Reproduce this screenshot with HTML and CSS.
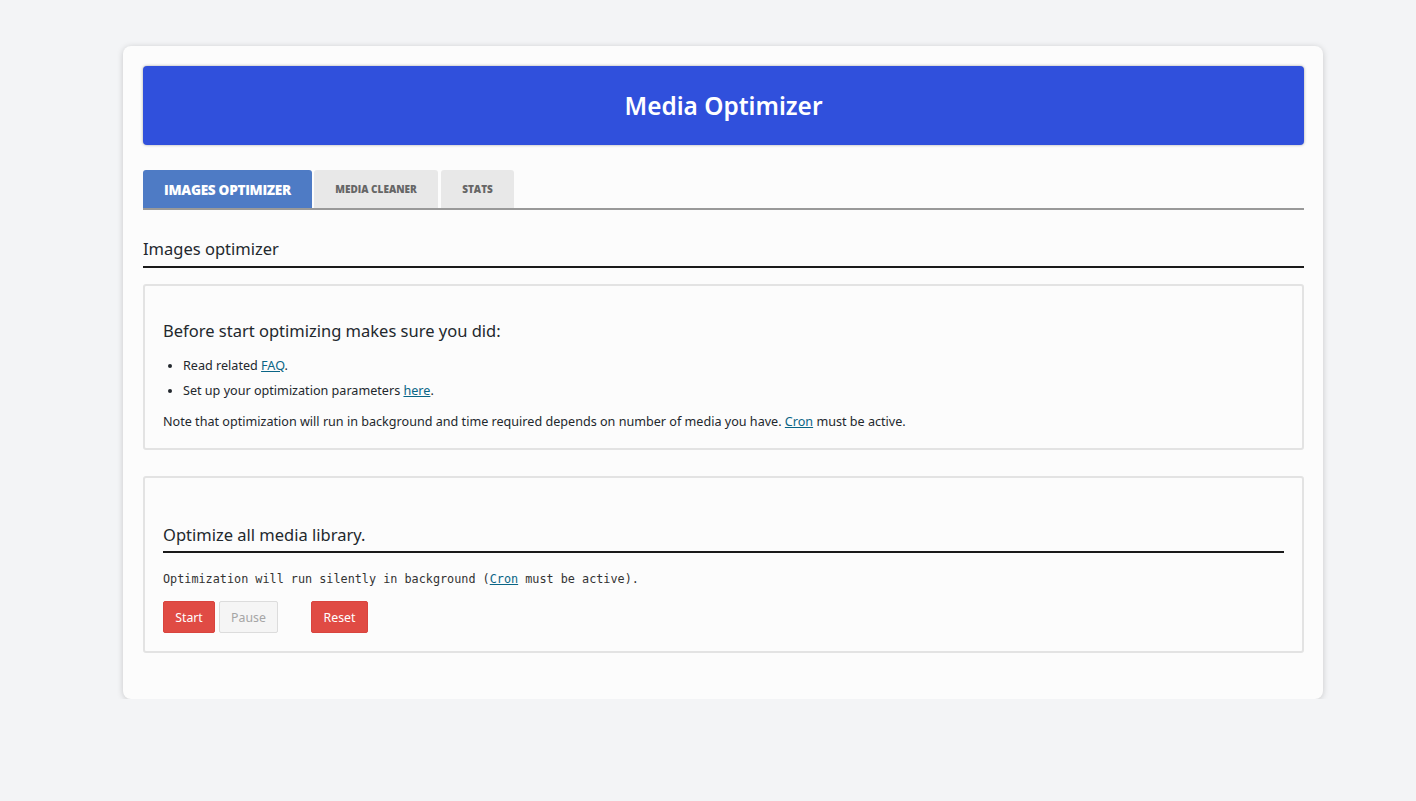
FILE: index.html
```html
<!DOCTYPE html>
<html>
<head>
<meta charset="utf-8">
<link rel="stylesheet" href="styles.css">
</head>
<body>
<div class="page">
  <div class="card">
    <div class="header"><h1>Media Optimizer</h1></div>
    <div class="tabs">
      <div class="tab active">IMAGES OPTIMIZER</div>
      <div class="tab">MEDIA CLEANER</div>
      <div class="tab">STATS</div>
    </div>
    <h2 class="section-title">Images optimizer</h2>
    <div class="box box-info">
      <h3>Before start optimizing makes sure you did:</h3>
      <ul>
        <li>Read related <a href="#">FAQ</a>.</li>
        <li>Set up your optimization parameters <a href="#">here</a>.</li>
      </ul>
      <p>Note that optimization will run in background and time required depends on number of media you have. <a href="#">Cron</a> must be active.</p>
    </div>
    <div class="box box-run">
      <h3 class="underlined">Optimize all media library.</h3>
      <p class="mono">Optimization will run silently in background (<a href="#">Cron</a> must be active).</p>
      <div class="buttons">
        <button class="btn btn-red">Start</button>
        <button class="btn btn-disabled">Pause</button>
        <button class="btn btn-red btn-reset">Reset</button>
      </div>
    </div>
  </div>
</div>
</body>
</html>
```

FILE: styles.css
```css
* { box-sizing: border-box; }
html, body { margin: 0; padding: 0; }
body {
  background: #f3f4f6;
  font-family: "Noto Sans", "Open Sans", sans-serif;
  color: #23282d;
}
.page {
  padding: 46px 0 0 123px;
}
.card {
  width: 1200px;
  height: 653px;
  background: #fcfcfc;
  border-radius: 8px;
  box-shadow: 0 1px 6px rgba(0,0,0,0.18);
  padding: 20px 19px 20px 20px;
}
.header {
  height: 79px;
  background: #3050dc;
  border-radius: 4px;
  box-shadow: 0 0 3px rgba(0,0,0,0.35);
  display: flex;
  align-items: center;
  justify-content: center;
}
.header h1 {
  margin: 0;
  color: #fff;
  font-size: 24.4px;
  font-weight: 600;
  font-family: "Noto Sans", sans-serif;
}
.tabs {
  margin-top: 25px;
  display: flex;
  gap: 2px;
  border-bottom: 2px solid #999;
  height: 40px;
}
.tab {
  height: 38px;
  background: #e8e8e8;
  border-radius: 3px 3px 0 0;
  font-family: "Open Sans", sans-serif;
  font-weight: 800;
  font-size: 10px;
  color: #666;
  display: flex;
  align-items: center;
  justify-content: center;
  white-space: nowrap;
}
.tab.active {
  background: #4e7bc5;
  color: #fff;
  font-size: 13.6px;
  letter-spacing: -0.3px;
  width: 169px;
}
.tab:nth-child(2) { width: 124px; }
.tab:nth-child(3) { width: 73px; margin-left: 1px; }
.section-title {
  margin: 28px 0 0 0;
  font-size: 16.5px;
  font-weight: 400;
  padding-bottom: 6px;
  border-bottom: 2px solid #1a1a1a;
  line-height: 22px;
}
.box {
  margin-top: 16px;
  border: 2px solid #e3e3e3;
  border-radius: 3px;
  background: #fcfcfc;
  padding: 20px 18px;
}
.box h3 {
  margin: 0;
  font-size: 16.5px;
  font-weight: 400;
  line-height: 22px;
}
.box-info { height: 166px; padding-top: 34px; }
.box-info ul {
  margin: 11px 0 0 0;
  padding-left: 20px;
  font-size: 12.6px;
  line-height: 25px;
}
.box-info p {
  margin: 9px 0 0 0;
  font-size: 12.6px;
  line-height: 19px;
}
a { color: #0a6586; text-decoration: underline; }
.box-run { margin-top: 26px; height: 177px; padding-top: 46px; }
.underlined {
  padding-bottom: 5px;
  border-bottom: 2px solid #1a1a1a;
}
.mono {
  margin: 18px 0 0 0;
  font-family: "DejaVu Sans Mono", "Liberation Mono", monospace;
  font-size: 11.8px;
  color: #333;
  line-height: 16px;
}
.buttons {
  margin-top: 14px;
  display: flex;
  gap: 4px;
}
.btn {
  height: 32px;
  font-family: "Noto Sans", sans-serif;
  font-size: 12.3px;
  border-radius: 2px;
  padding: 0;
  border: 1px solid transparent;
  cursor: pointer;
}
.btn-red {
  background: #e04b44;
  color: #fff;
  border-color: #d9443e;
  width: 52px;
}
.btn-disabled {
  background: #f5f5f5;
  color: #a5a5a5;
  border-color: #dcdcdc;
  width: 59px;
}
.btn-reset { margin-left: 29px; width: 57px; }
```
